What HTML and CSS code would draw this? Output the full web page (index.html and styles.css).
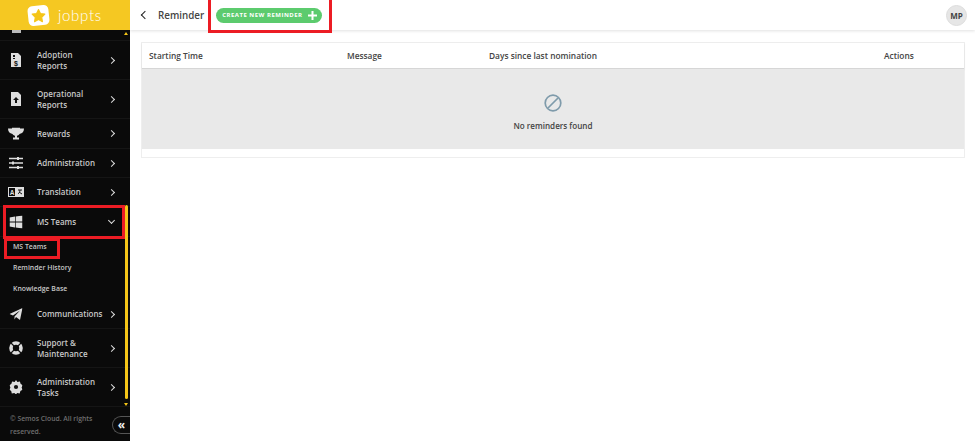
FILE: index.html
```html
<!DOCTYPE html>
<html lang="en">
<head>
<meta charset="utf-8">
<title>Reminder</title>
<link rel="stylesheet" href="styles.css">
</head>
<body>
<div class="app">
  <aside class="sidebar">
    <div class="logo">
      <svg class="logo-mark" width="23" height="23" viewBox="0 0 22 22"><rect x="1" y="1.500" width="20" height="19" rx="4.500" fill="#fff" transform="rotate(-6 11 11)"/><path d="M11 5.200l1.900 3.900 4.200.6-3 3 .7 4.200-3.800-2-3.800 2 .7-4.200-3-3 4.200-.6z" fill="#f5c518" stroke="#f5c518" stroke-linejoin="round"/></svg>
      <span class="logo-text">jobpts</span>
    </div>
    <nav class="nav">
      <div class="item cut"><span class="cut-ico"></span></div>
      <div class="item tall">
        <svg class="ico" width="12" height="14" viewBox="0 0 12 14"><path d="M1 0h7l3 3v11H1z" fill="#ddd"/><path d="M3 2h2v2H3zM3 5h2v1H3z" fill="#111"/><text x="6" y="12.500" font-size="7" font-family="Liberation Sans" font-weight="700" fill="#111" text-anchor="middle">$</text></svg>
        <span class="label">Adoption<br>Reports</span><span class="chev"></span>
      </div>
      <div class="item tall">
        <svg class="ico" width="12" height="14" viewBox="0 0 12 14"><path d="M1 0h7l3 3v11H1z" fill="#ddd"/><path d="M6 5l3 3H7v3H5V8H3z" fill="#111"/></svg>
        <span class="label">Operational<br>Reports</span><span class="chev"></span>
      </div>
      <div class="item r30">
        <svg class="ico" width="16" height="13" viewBox="0 0 16 13"><path d="M4 0h8v1h4c0 3-1.500 5-4.500 5.500C11 7.500 9.500 8 9 8.500V10h2v2H5v-2h2V8.500C6.500 8 5 7.500 4.500 6.500 1.500 6 0 4 0 1h4z" fill="#ddd"/></svg>
        <span class="label">Rewards</span><span class="chev"></span>
      </div>
      <div class="item r29">
        <svg class="ico" width="14" height="12" viewBox="0 0 14 12"><path d="M0 1.500h14M0 6h14M0 10.500h14" stroke="#ddd" stroke-width="1.300"/><path d="M8 0h2v3H8zM3 4.500h2v3H3zM8 9h2v3H8z" fill="#ddd"/></svg>
        <span class="label">Administration</span><span class="chev"></span>
      </div>
      <div class="item r29">
        <svg class="ico" width="16" height="10" viewBox="0 0 16 10"><rect x=".5" y=".5" width="7" height="9" fill="none" stroke="#ddd"/><rect x="8" width="8" height="10" fill="#ddd"/><text x="4" y="7.500" font-size="6.500" font-family="Liberation Sans" font-weight="700" fill="#ddd" text-anchor="middle">A</text><path d="M10 3h4M12 3c0 2-1 3-2 4M11 5l3 2" stroke="#111" fill="none"/></svg>
        <span class="label">Translation</span><span class="chev"></span>
      </div>
      <div class="item r30">
        <svg class="ico" width="13" height="13" viewBox="0 0 13 13"><path d="M0 2l5.500-.9v5H0zM6.200 1l6.800-1v6.100H6.200zM0 6.900h5.500v5L0 11zM6.200 6.900H13V13l-6.800-1z" fill="#ddd"/></svg>
        <span class="label">MS Teams</span><span class="chev open"></span>
      </div>
      <a class="sub">MS Teams</a>
      <a class="sub">Reminder History</a>
      <a class="sub">Knowledge Base</a>
      <div class="item r29">
        <svg class="ico" width="13" height="12" viewBox="0 0 13 12"><path d="M13 0L10.500 12 6.500 9 5 11.500V8.500L10.500 2.500 3.500 7.500 0 6z" fill="#ddd"/></svg>
        <span class="label">Communications</span><span class="chev"></span>
      </div>
      <div class="item tall">
        <svg class="ico" width="14" height="14" viewBox="0 0 14 14"><circle cx="7" cy="7" r="5" fill="none" stroke="#ddd" stroke-width="3.600"/><path d="M2 2l3 3M12 2L9 5M2 12l3-3M12 12L9 9" stroke="#111" stroke-width="1.200"/></svg>
        <span class="label">Support &amp;<br>Maintenance</span><span class="chev"></span>
      </div>
      <div class="item tall">
        <svg class="ico" width="13" height="14" viewBox="0 0 13 14"><path d="M6.500 0l1.400 2 2.500-.6.700 2.400 2 1.400-1 2.300.9 2.300-2.100 1.200-.7 2.400-2.500-.4-1.200 1.400-1.700-1.400-2.500.4-.6-2.400L0 9.800l.9-2.300L0 5.200l1.900-1.400.7-2.400 2.500.6z" fill="#ddd"/><circle cx="6.500" cy="7" r="2.100" fill="#111"/></svg>
        <span class="label">Administration<br>Tasks</span><span class="chev"></span>
      </div>
    </nav>
    <footer class="foot">© Semos Cloud. All rights reserved.</footer>
    <div class="scroll-up"></div>
    <div class="scroll-thumb"></div>
    <div class="scroll-down"></div>
    <button class="collapse" aria-label="Collapse">«</button>
  </aside>
  <main class="main">
    <header class="top">
      <span class="back"></span>
      <h1 class="title">Reminder</h1>
      <button class="create">CREATE NEW REMINDER<svg class="plus" width="9" height="9" viewBox="0 0 9 9"><path d="M4.500 0v9M0 4.500h9" stroke="#fff" stroke-width="2"/></svg></button>
      <span class="avatar">MP</span>
    </header>
    <section class="card">
      <div class="thead">
        <span class="c1">Starting Time</span>
        <span class="c2">Message</span>
        <span class="c3">Days since last nomination</span>
        <span class="c4">Actions</span>
      </div>
      <div class="empty">
        <svg width="18" height="18" viewBox="0 0 18 18"><circle cx="9" cy="9" r="7.800" fill="none" stroke="#7f9bab" stroke-width="1.700"/><path d="M4 14L14 4" stroke="#7f9bab" stroke-width="1.700"/></svg>
        <p class="empty-text">No reminders found</p>
      </div>
    </section>
  </main>
</div>
<div class="mark m1"></div>
<div class="mark m2"></div>
<div class="mark m3"></div>
</body>
</html>
```
FILE: styles.css
```css
* { box-sizing: border-box; }
html, body { margin: 0; height: 100%; }
body { font-family: "Open Sans", "Liberation Sans", sans-serif; background: #fff; overflow: hidden; position: relative; }
.app { display: flex; width: 975px; height: 441px; }

.sidebar { width: 130px; flex: none; background: #0a0a0a; display: flex; flex-direction: column; position: relative; }
.logo { height: 30px; background: #f5c822; display: flex; align-items: center; padding-left: 27px; gap: 8px; flex: none; }
.logo-text { color: #fff; font-family: "Lato", sans-serif; font-size: 15px; letter-spacing: .7px; font-weight: 300; line-height: 1; }
.nav { height: 376px; flex: none; overflow: hidden; }
.item { display: flex; align-items: center; padding-left: 37px; padding-right: 16px; position: relative; border-bottom: 1px solid #151515; color: #c8c8c8; font-size: 8px; font-weight: 600; line-height: 11.500px; }
.cut { height: 11px; }
.cut-ico { position: absolute; left: 12px; top: 0; width: 9px; height: 3px; background: #bbb; }
.tall { height: 39px; }
.r30 { height: 30px; }
.r29 { height: 29px; }
.ico { position: absolute; left: 16px; top: 50%; transform: translate(-50%, -50%); }
.label { flex: 1; white-space: nowrap; }
.chev { width: 5px; height: 5px; border-top: 1.500px solid #ddd; border-right: 1.500px solid #ddd; transform: rotate(45deg); flex: none; }
.chev.open { transform: rotate(135deg); margin-top: -2px; }
.sub { display: flex; align-items: center; height: 21px; padding: 0 0 3px 13px; color: #c8c8c8; font-size: 6.900px; font-weight: 600; }
.foot { flex: 1; padding: 6px 20px 0 10px; color: #6f6f6f; font-size: 6.800px; font-weight: 600; line-height: 12.500px; border-top: 1px solid #151515; }
.scroll-thumb { position: absolute; left: 125px; top: 205px; width: 3px; height: 194px; background: #f5c518; border-radius: 2px; }
.scroll-up, .scroll-down { position: absolute; left: 124px; width: 0; height: 0; border-left: 2.500px solid transparent; border-right: 2.500px solid transparent; }
.scroll-up { top: 32px; border-bottom: 3px solid #f5c518; }
.scroll-down { top: 403px; border-top: 3px solid #f5c518; }
.collapse { position: absolute; left: 112px; top: 416px; width: 18px; height: 18px; border: 1px solid #555; border-right: 0; border-radius: 9px 0 0 9px; background: #0a0a0a; color: #eee; font-size: 12px; font-weight: 700; line-height: 14px; padding: 0; font-family: "Open Sans", sans-serif; }

.main { flex: 1; min-width: 0; background: #fff; }
.top { height: 30px; display: flex; align-items: center; padding: 0 8px 0 10px; box-shadow: 0 1px 3px rgba(0,0,0,.12); }
.back { width: 6px; height: 6px; border-left: 1.800px solid #222; border-bottom: 1.800px solid #222; transform: rotate(45deg); margin-left: 2px; }
.title { margin: 0 0 0 10px; font-size: 9.800px; font-weight: 600; color: #444; }
.create { margin-left: 12px; height: 15px; width: 106px; padding: 0 5px 0 6px; border: 0; border-radius: 8px; background: #5ccb6e; color: #fff; font: 700 6px "Open Sans", sans-serif; letter-spacing: .5px; display: flex; align-items: center; justify-content: space-between; white-space: nowrap; }
.avatar { margin-left: auto; width: 21px; height: 21px; border-radius: 50%; background: #e6e6e6; border: 1px solid #ddd; color: #444; font-size: 8px; font-weight: 700; display: flex; align-items: center; justify-content: center; }

.card { margin: 12px 10px 0 11px; height: 116px; border: 1px solid #eee; }
.thead { height: 26px; display: flex; align-items: center; font-size: 8.350px; font-weight: 600; color: #444; border-bottom: 1px solid #d6d6d6; box-shadow: 0 1px 2px rgba(0,0,0,.08); padding-left: 7px; }
.c1 { width: 198px; }
.c2 { width: 142px; }
.c3 { width: 395px; }
.empty { height: 80px; background: #e9e9e9; display: flex; flex-direction: column; align-items: center; padding-top: 25px; }
.empty svg { display: block; }
.empty-text { margin: 8px 0 0; font-size: 8.100px; font-weight: 600; color: #444; line-height: 12px; }

.mark { position: absolute; border: 3px solid #ec1c24; pointer-events: none; }
.m1 { left: 208px; top: -3px; width: 124px; height: 36px; }
.m2 { left: 3px; top: 205px; width: 122px; height: 34px; }
.m3 { left: 4px; top: 238px; width: 56px; height: 21px; }
```
